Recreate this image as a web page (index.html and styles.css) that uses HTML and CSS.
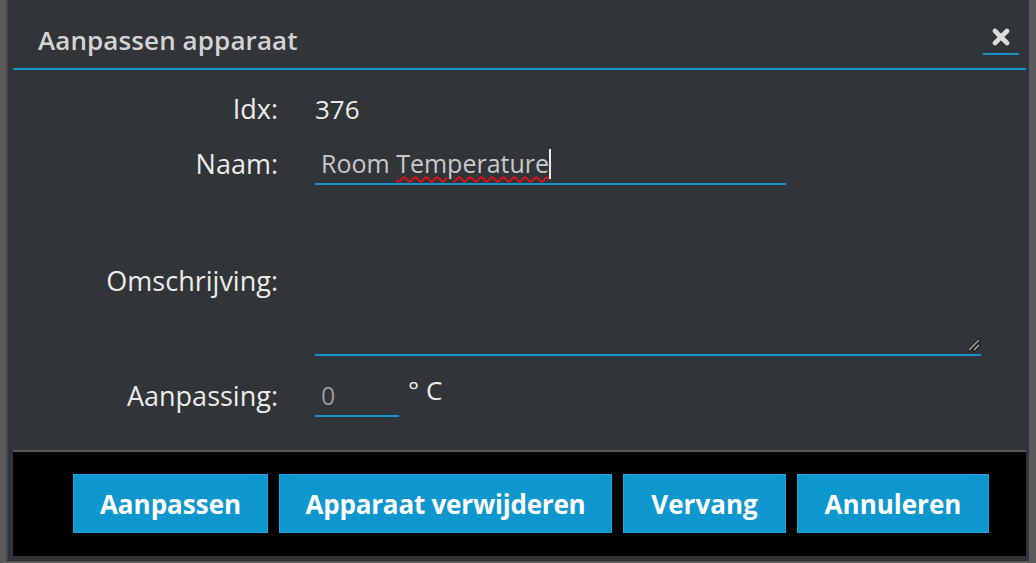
FILE: index.html
```html
<!DOCTYPE html>
<html lang="nl">
<head>
<meta charset="utf-8">
<title>Aanpassen apparaat</title>
<link rel="stylesheet" href="styles.css">
</head>
<body>
<div class="dialog">
  <div class="titlebar">
    <span class="title">Aanpassen apparaat</span>
    <button class="close" type="button" aria-label="Sluiten">
      <svg width="18" height="18" viewBox="0 0 18 18"><path d="M3 3 L15 15 M15 3 L3 15" stroke="#dcdcdc" stroke-width="4.6" stroke-linecap="round"/></svg>
    </button>
  </div>
  <div class="form">
    <div class="row row-idx">
      <span class="label">Idx:</span>
      <span class="value">376</span>
    </div>
    <div class="row row-name">
      <span class="label">Naam:</span>
      <div class="field field-name">Room <span class="typo">Temperature</span><span class="caret"></span></div>
    </div>
    <div class="row row-desc">
      <span class="label">Omschrijving:</span>
      <div class="area">
        <svg class="grip" width="16" height="16" viewBox="0 0 16 16"><path d="M14 3 L4 13 M14 8 L9 13" stroke="#222" stroke-width="3.4" stroke-linecap="square"/><path d="M14 3 L4 13 M14 8 L9 13" stroke="#aaa" stroke-width="1.4"/></svg>
      </div>
    </div>
    <div class="row row-adj">
      <span class="label">Aanpassing:</span>
      <div class="adj">
        <div class="field field-adj">0</div>
        <span class="unit">° C</span>
      </div>
    </div>
  </div>
  <div class="footer">
    <button class="btn btn-save" type="button">Aanpassen</button>
    <button class="btn btn-delete" type="button">Apparaat verwijderen</button>
    <button class="btn btn-replace" type="button">Vervang</button>
    <button class="btn btn-cancel" type="button">Annuleren</button>
  </div>
</div>
</body>
</html>
```
FILE: styles.css
```css
html, body {
  margin: 0;
  padding: 0;
  height: 563px;
  overflow: hidden;
  background: #5a5a5a;
  font-family: "Open Sans", "Liberation Sans", sans-serif;
}

.dialog {
  box-sizing: border-box;
  margin-left: 6px;
  width: 1023px;
  height: 561px;
  background: #323538;
  border-left: 2px solid #45484b;
  border-bottom: 1px solid #2b2d30;
  padding: 0 3px 3px 5px;
  display: flex;
  flex-direction: column;
}

.titlebar {
  height: 68px;
  border-bottom: 2px solid #1593cb;
  display: flex;
  align-items: flex-start;
  padding: 0 7px 0 25px;
  flex-shrink: 0;
}

.title {
  font-size: 26px;
  font-weight: 600;
  color: #d4d4d4;
  line-height: 36px;
  margin-top: 22px;
  letter-spacing: 0.1px;
}

.close {
  margin-left: auto;
  margin-top: 20px;
  width: 36px;
  height: 35px;
  padding: 0;
  background: transparent;
  border: none;
  border-bottom: 2px solid #1593cb;
  display: flex;
  align-items: flex-start;
  justify-content: center;
  padding-top: 8px;
  box-sizing: border-box;
}

.form {
  display: flex;
  flex-direction: column;
}

.row {
  display: grid;
  grid-template-columns: 265px 1fr;
  column-gap: 37px;
  align-items: center;
}

.label {
  text-align: right;
  font-size: 27px;
  color: #ebebeb;
  line-height: 36px;
}

.row-idx { margin-top: 18px; height: 42px; }
.row-name { margin-top: 13px; height: 42px; }
.row-desc { margin-top: 20px; height: 151px; }
.row-adj { margin-top: 19px; height: 42px; }

.value {
  font-size: 26px;
  color: #ebebeb;
  line-height: 36px;
}

.field {
  box-sizing: border-box;
  height: 42px;
  border-bottom: 2px solid #1593cb;
  padding-left: 6px;
  font-size: 25px;
  line-height: 40px;
  color: #c8c8c8;
  white-space: nowrap;
}

.field-name {
  width: 471px;
}

.typo {
  text-decoration: underline wavy #e3101c;
  text-decoration-thickness: 1.6px;
  text-underline-offset: 3px;
}

.caret {
  display: inline-block;
  width: 2px;
  height: 30px;
  background: #e8e8e8;
  vertical-align: -6px;
}

.area {
  position: relative;
  box-sizing: border-box;
  width: 666px;
  height: 151px;
  border-bottom: 2px solid #1593cb;
}

.grip {
  position: absolute;
  right: 0;
  bottom: 1px;
}

.adj {
  display: flex;
  align-items: flex-start;
  gap: 9px;
}

.field-adj {
  width: 84px;
  color: #9a9a9a;
}

.unit {
  font-size: 26px;
  color: #ebebeb;
  line-height: 36px;
  margin-top: -3px;
}

.footer {
  margin-top: 33px;
  border-top: 2px solid #55585c;
  background: #000;
  height: 106px;
  box-sizing: border-box;
  display: flex;
  justify-content: flex-end;
  align-items: flex-start;
  gap: 11px;
  padding: 22px 37px 0 0;
}

.btn {
  box-sizing: border-box;
  height: 59px;
  padding: 0;
  background: #0e96cf;
  border: 1px solid #1ea3dc;
  color: #ffffff;
  font-family: "Open Sans", "Liberation Sans", sans-serif;
  font-size: 26px;
  font-weight: 700;
  white-space: nowrap;
}

.btn-save { width: 195px; }
.btn-delete { width: 333px; letter-spacing: -0.2px; }
.btn-replace { width: 163px; }
.btn-cancel { width: 192px; }
```
